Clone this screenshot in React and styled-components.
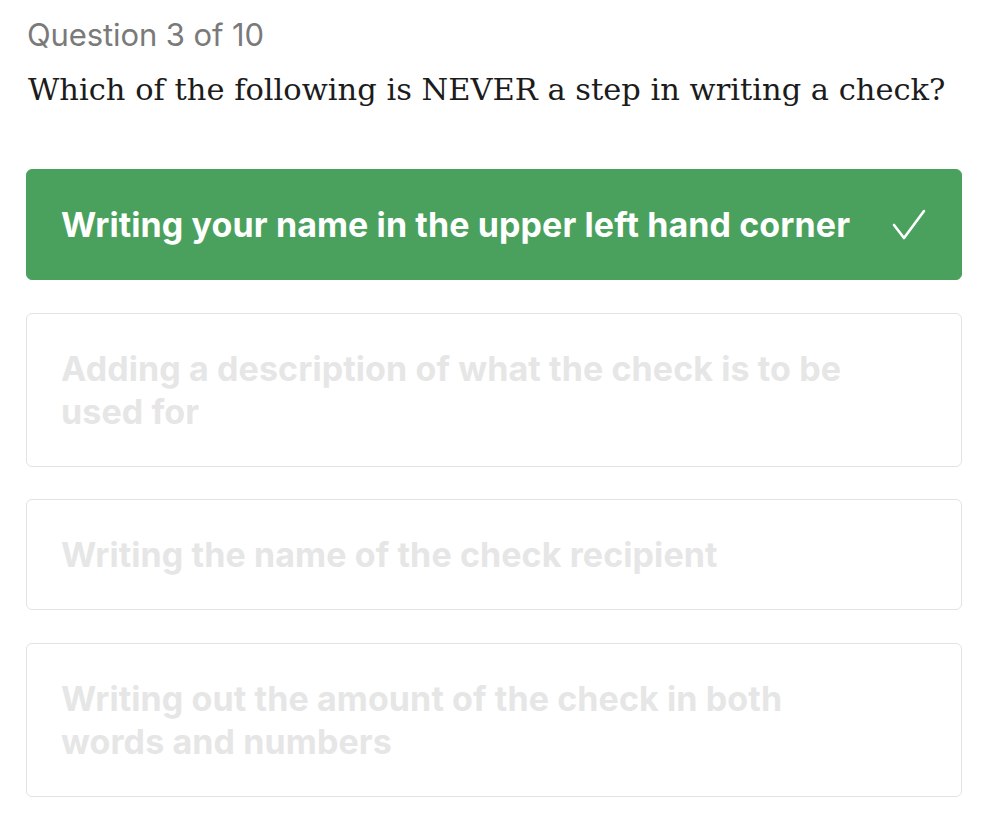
import React from "react";
import styled, { createGlobalStyle } from "styled-components";

const Global = createGlobalStyle`
  html, body { margin: 0; padding: 0; background: #fff; }
`;

const Page = styled.div`
  padding: 16px 24px 0 26px;
  width: 936px;
`;

const Counter = styled.div`
  font-family: "Inter", "Liberation Sans", sans-serif;
  font-size: 31px;
  letter-spacing: -0.1px;
  color: #7a7a7a;
  padding-left: 1px;
  line-height: 38px;
`;

const Prompt = styled.h1`
  font-family: "DejaVu Serif", "Liberation Serif", serif;
  font-weight: 400;
  font-size: 30.5px;
  color: #1c1c1c;
  margin: 14px 0 0 2px;
  line-height: 44px;
  white-space: nowrap;
`;

const Choices = styled.div`
  display: flex;
  flex-direction: column;
  gap: 32.5px;
  margin-top: 57px;
`;

const Choice = styled.div`
  display: flex;
  align-items: center;
  justify-content: space-between;
  border-radius: 6px;
  border: 1px solid ${p => (p.$correct ? "#4aa15d" : "#e3e3e3")};
  background: ${p => (p.$correct ? "#4aa15d" : "#fff")};
  color: ${p => (p.$correct ? "#fff" : "#e6e6e6")};
  padding: 33px 34px;
  font-family: "Inter", "Liberation Sans", sans-serif;
  font-weight: 700;
  font-size: 34px;
  letter-spacing: 0.1px;
  line-height: 43px;
`;

const Label = styled.span`
  max-width: 800px;
`;

const Check = () => (
  <svg width="36" height="32" viewBox="0 0 36 32" fill="none">
    <path d="M3 16 L13 29 L33 2" stroke="#fff" strokeWidth="2.6" strokeLinecap="round" strokeLinejoin="round" />
  </svg>
);

const choices = [
  { text: "Writing your name in the upper left hand corner", correct: true },
  { text: "Adding a description of what the check is to be used for" },
  { text: "Writing the name of the check recipient" },
  { text: "Writing out the amount of the check in both words and numbers" },
];

function App() {
  return (
    <>
      <Global />
      <Page>
        <Counter>Question 3 of 10</Counter>
        <Prompt>Which of the following is NEVER a step in writing a check?</Prompt>
        <Choices>
          {choices.map((c, i) => (
            <Choice key={i} $correct={c.correct}>
              <Label>{c.text}</Label>
              {c.correct && <Check />}
            </Choice>
          ))}
        </Choices>
      </Page>
    </>
  );
}

export default App;
